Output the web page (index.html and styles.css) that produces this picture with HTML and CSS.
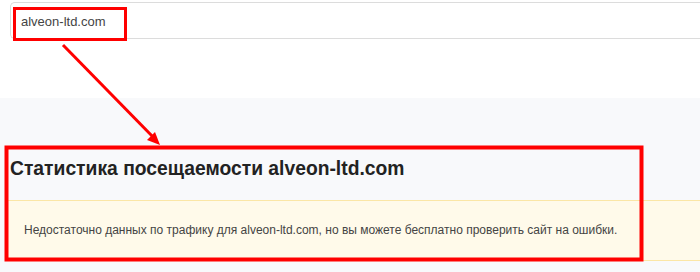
FILE: index.html
```html
<!DOCTYPE html>
<html lang="ru">
<head>
    <meta charset="UTF-8">
    <title>alveon-ltd.com</title>
    <link rel="stylesheet" href="styles.css">
</head>
<body>
    <header class="top">
        <div class="search">
            <span class="search-text">alveon-ltd.com</span>
        </div>
    </header>

    <main class="content">
        <h1 class="title">Статистика посещаемости alveon-ltd.com</h1>
        <div class="alert">
            Недостаточно данных по трафику для alveon-ltd.com, но вы можете бесплатно проверить сайт на ошибки.
        </div>
    </main>

    <!-- annotation layer -->
    <svg class="marks" width="700" height="272" viewBox="0 0 700 272">
        <rect x="14.5" y="8.5" width="111" height="31" fill="none" stroke="#ff0000" stroke-width="3"/>
        <line x1="63" y1="45" x2="155" y2="139" stroke="#ff0000" stroke-width="3"/>
        <polygon points="160,145 147,140 155,132" fill="#ff0000"/>
        <rect x="6.5" y="147.5" width="635" height="112" fill="none" stroke="#ff0000" stroke-width="4"/>
    </svg>
</body>
</html>
```

FILE: styles.css
```css
* {
    margin: 0;
    padding: 0;
    box-sizing: border-box;
}

body {
    width: 700px;
    height: 272px;
    overflow: hidden;
    position: relative;
    font-family: 'Liberation Sans', Arial, sans-serif;
    background: #f8f9fb;
}

.top {
    height: 98px;
    background: #fff;
    padding: 2px 0 0 10px;
}

.search {
    height: 37px;
    border: 1px solid #dcdcdc;
    border-right: none;
    border-radius: 5px 0 0 5px;
    padding: 9px 0 0 10px;
    background: #fff;
}

.search-text {
    font-size: 13px;
    color: #444;
}

.content {
    padding-top: 58px;
}

.title {
    font-size: 19.3px;
    font-weight: 700;
    color: #222;
    padding-left: 10px;
    height: 44px;
    line-height: 22px;
    padding-top: 2px;
}

.alert {
    margin-left: 6px;
    height: 61px;
    background: #fffaea;
    border-top: 1px solid #fbe6a6;
    border-bottom: 1px solid #fbe6a6;
    padding: 22px 0 0 18px;
    font-size: 12px;
    color: #444;
}

.marks {
    position: absolute;
    top: 0;
    left: 0;
    pointer-events: none;
}
```
